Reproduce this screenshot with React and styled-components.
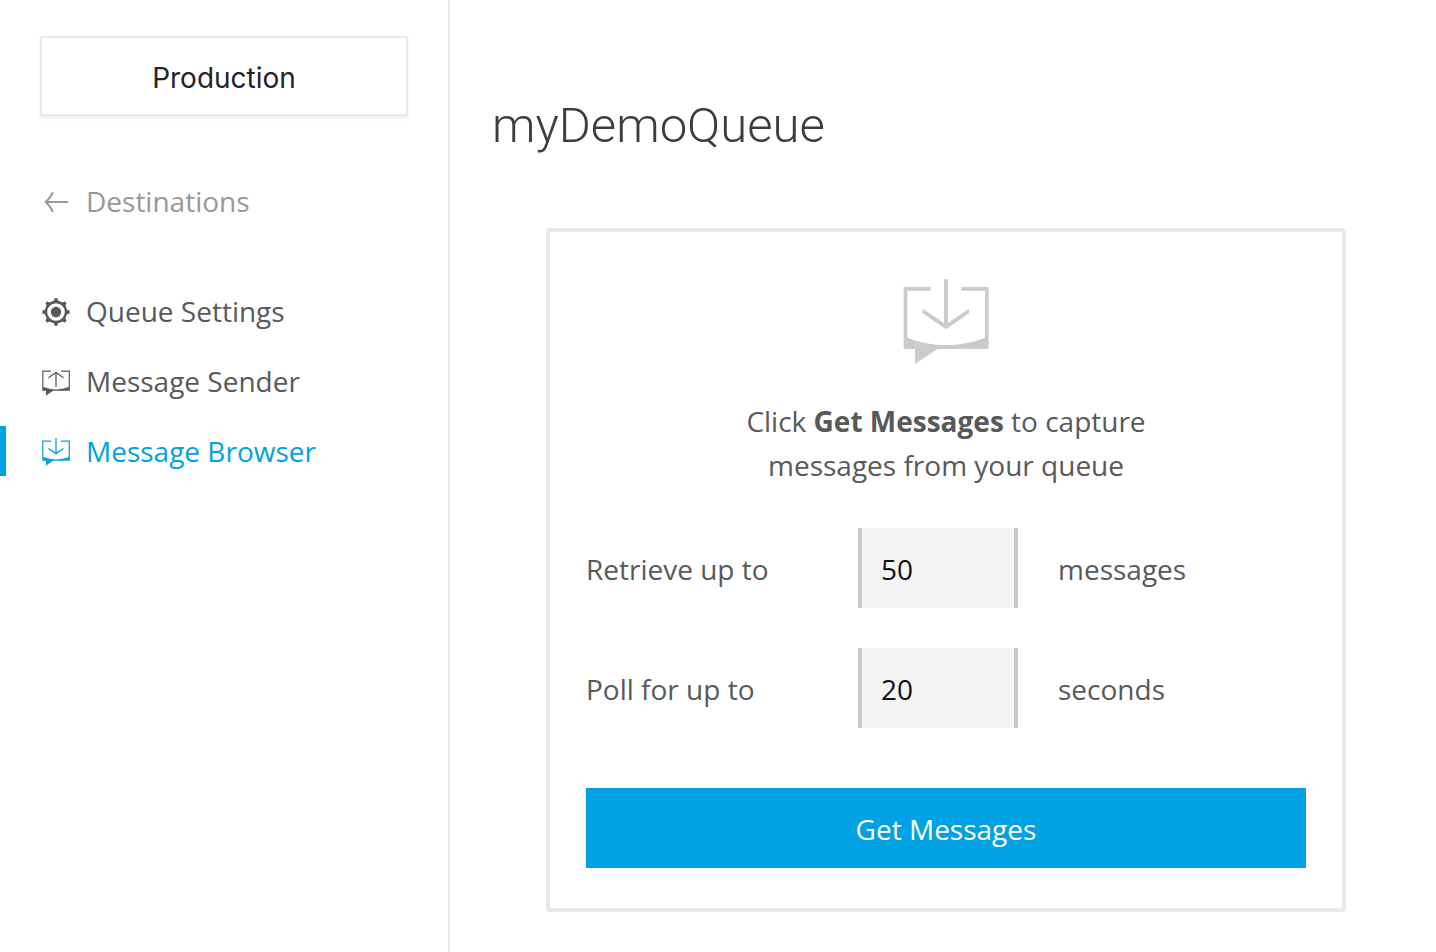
import React from "react";
import styled, { createGlobalStyle } from "styled-components";

const GlobalStyle = createGlobalStyle`
  *, *::before, *::after { box-sizing: border-box; }
  body {
    margin: 0;
    background: #fff;
    color: #58595a;
    font-family: "Open Sans", sans-serif;
    font-size: 28px;
    line-height: 44px;
  }
`;

const Page = styled.div`
  display: flex;
  min-height: 100vh;
`;

const Sidebar = styled.aside`
  flex: 0 0 450px;
  padding-top: 36px;
  border-right: 2px solid #e8e9ea;
`;

const EnvironmentButton = styled.button`
  display: block;
  width: calc(100% - 80px);
  height: 80px;
  margin: 0 40px 60px;
  padding: 4px 0 0;
  border: 2px solid #e8e9ea;
  background: #fff;
  box-shadow: 0 2px 4px rgba(0, 0, 0, 0.08);
  color: #232425;
  font-family: Inter, sans-serif;
  font-size: 28px;
`;

const NavList = styled.ul`
  display: flex;
  flex-direction: column;
  gap: 20px;
  margin: 60px 0 0;
  padding: 0;
  list-style: none;
`;

const Icon = styled.svg`
  display: block;
  flex: none;
  width: ${(p) => p.$size}px;
  height: ${(p) => p.$size}px;
`;

const NavLink = styled.a`
  position: relative;
  display: flex;
  align-items: center;
  gap: 16px;
  height: 50px;
  padding-left: 42px;
  color: ${(p) => (p.$active ? "#00a2e1" : p.$muted ? "#979899" : "#58595a")};
  text-decoration: none;

  &::before {
    content: "";
    position: absolute;
    inset: 0 auto 0 0;
    width: ${(p) => (p.$active ? "6px" : "0")};
    background: currentColor;
  }

  ${Icon} {
    margin-top: 2px;
  }
`;

const Main = styled.main`
  flex: 1;
  min-width: 0;
  padding: 92px 36px 40px 42px;
`;

const Title = styled.h1`
  margin: 0 0 68px;
  color: #3b3d3e;
  font-family: Roboto, sans-serif;
  font-size: 49px;
  font-weight: 300;
  line-height: 68px;
`;

const Card = styled.form`
  display: flex;
  flex-direction: column;
  gap: 40px;
  max-width: 800px;
  margin: 0 auto;
  padding: 47px 36px 40px;
  border: 4px solid #e8e9ea;
  border-radius: 4px;
`;

const Intro = styled.div`
  display: flex;
  flex-direction: column;
  align-items: center;
  gap: 34px;
  margin-bottom: 1px;
  color: #c9cbcc;
`;

const IntroText = styled.p`
  max-width: 420px;
  margin: 0;
  color: #58595a;
  text-align: center;
`;

const Field = styled.div`
  display: grid;
  grid-template-columns: 232px 160px 1fr;
  column-gap: 40px;
  align-items: center;
`;

const FieldLabel = styled.label`
  padding-top: 2px;
`;

const Unit = styled.span`
  padding-top: 2px;
`;

const NumberInput = styled.input`
  width: 100%;
  height: 80px;
  padding: 2px 19px 0;
  border: solid #c8c9ca;
  border-width: 0 4px;
  border-radius: 0;
  background: #f3f4f6;
  color: #111;
  font: inherit;
`;

const SubmitButton = styled.button`
  height: 80px;
  margin-top: 20px;
  padding: 2px 0 0;
  border: 0;
  background: #00a2e3;
  color: #fff;
  font: inherit;
`;

const BackIcon = () => (
  <Icon $size={28} viewBox="0 0 28 28" fill="none" stroke="currentColor" strokeWidth="2" aria-hidden="true">
    <path d="M26 14H3.5M11 4.2Q8.5 9.5 3.8 14Q8.5 18.500 11 23.800" />
  </Icon>
);

const GearIcon = () => (
  <Icon $size={28} viewBox="0 0 84 84" fill="currentColor" aria-hidden="true">
    <circle cx="42" cy="42" r="15.500" />
    <circle cx="42" cy="42" r="30" fill="none" stroke="currentColor" strokeWidth="7" />
    {[0, 45, 90, 135, 180, 225, 270, 315].map((angle) => (
      <path key={angle} d="M32 12L37 6V1H47V6L52 12Z" transform={`rotate(${angle} 42 42)`} />
    ))}
  </Icon>
);

const MessageIcon = ({ size, outgoing }) => (
  <Icon $size={size} viewBox="39 27 258 258" fill="currentColor" aria-hidden="true">
    <path d="M41 51H122V62H52V203Q105 225 168 225Q231 225 285 203V62H214V51H296V237H142L75 282V237H41Z" />
    {outgoing ? (
      <path d="M162 200V79L98 124V110L168 61L237 110V124L174 79V200Z" />
    ) : (
      <path d="M162 28H174V159L237 116V130L168 178L98 130V116L162 159Z" />
    )}
  </Icon>
);

export default function App() {
  return (
    <>
      <GlobalStyle />
      <Page>
        <Sidebar>
          <EnvironmentButton type="button">Production</EnvironmentButton>
          <nav>
            <NavLink href="#destinations" $muted>
              <BackIcon />
              Destinations
            </NavLink>
            <NavList>
              <li>
                <NavLink href="#settings">
                  <GearIcon />
                  Queue Settings
                </NavLink>
              </li>
              <li>
                <NavLink href="#sender">
                  <MessageIcon size={28} outgoing />
                  Message Sender
                </NavLink>
              </li>
              <li>
                <NavLink href="#browser" $active aria-current="page">
                  <MessageIcon size={28} />
                  Message Browser
                </NavLink>
              </li>
            </NavList>
          </nav>
        </Sidebar>
        <Main>
          <Title>myDemoQueue</Title>
          <Card onSubmit={(event) => event.preventDefault()}>
            <Intro>
              <MessageIcon size={86} />
              <IntroText>
                Click <strong>Get Messages</strong> to capture messages from your queue
              </IntroText>
            </Intro>
            <Field>
              <FieldLabel htmlFor="limit">Retrieve up to</FieldLabel>
              <NumberInput id="limit" type="text" inputMode="numeric" defaultValue="50" />
              <Unit>messages</Unit>
            </Field>
            <Field>
              <FieldLabel htmlFor="timeout">Poll for up to</FieldLabel>
              <NumberInput id="timeout" type="text" inputMode="numeric" defaultValue="20" />
              <Unit>seconds</Unit>
            </Field>
            <SubmitButton type="submit">Get Messages</SubmitButton>
          </Card>
        </Main>
      </Page>
    </>
  );
}
